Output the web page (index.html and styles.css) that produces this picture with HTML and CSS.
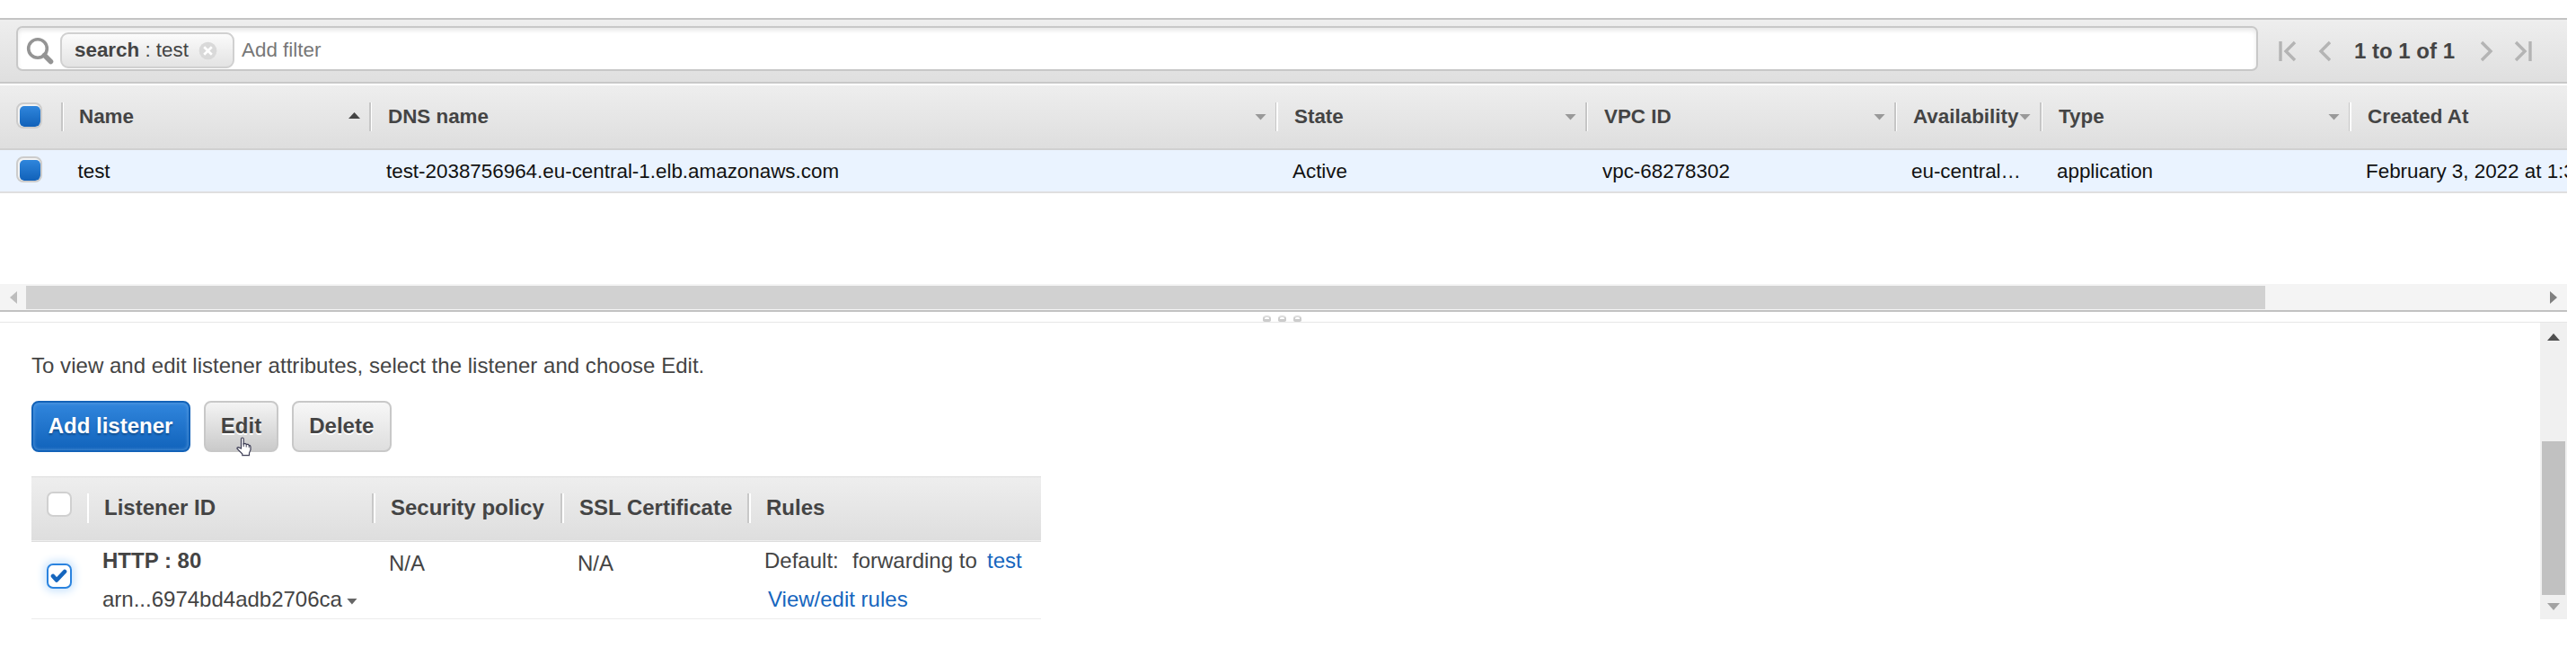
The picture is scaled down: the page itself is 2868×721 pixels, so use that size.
FILE: index.html
```html
<!DOCTYPE html>
<html lang="en">
<head>
<meta charset="utf-8">
<title>Load Balancers</title>
<link rel="stylesheet" href="styles.css">
</head>
<body>
<div class="console">
  <div class="toolbar">
    <div class="search">
      <svg class="search-icon" viewBox="0 0 32 32"><circle cx="13" cy="13" r="10.3" fill="none" stroke="#949494" stroke-width="3.6"/><path d="M20.5 20.5 27.5 27.5" stroke="#949494" stroke-width="5.6" stroke-linecap="round"/></svg>
      <div class="chip"><b>search</b><span> : test</span>
        <svg class="chip-close" viewBox="0 0 22 22"><circle cx="11" cy="11" r="10.3" fill="#d9d9d9"/><path d="M6.5 6.5l9 9M15.5 6.5l-9 9" stroke="#fff" stroke-width="2.8"/></svg>
      </div>
      <span class="add-filter">Add filter</span>
    </div>
    <div class="pager">
      <svg class="pg-first" viewBox="0 0 20 24"><path d="M2 1v22M18 2 8 12 18 22"/></svg>
      <svg class="pg-prev" viewBox="0 0 14 24"><path d="M13 2 3 12 13 22"/></svg>
      <b>1 to 1 of 1</b>
      <svg class="pg-next" viewBox="0 0 14 24"><path d="M1 2 11 12 1 22"/></svg>
      <svg class="pg-last" viewBox="0 0 20 24"><path d="M18 1v22M2 2 12 12 2 22"/></svg>
    </div>
  </div>

  <div class="grid-row grid-head">
    <div class="cell check"><span class="box"></span></div>
    <div class="cell">Name<i class="sort-up"></i></div>
    <div class="cell">DNS name<i class="caret"></i></div>
    <div class="cell">State<i class="caret"></i></div>
    <div class="cell">VPC ID<i class="caret"></i></div>
    <div class="cell">Availability<i class="caret"></i></div>
    <div class="cell">Type<i class="caret"></i></div>
    <div class="cell">Created At</div>
  </div>
  <div class="grid-row grid-data">
    <div class="cell check"><span class="box"></span></div>
    <div class="cell">test</div>
    <div class="cell">test-2038756964.eu-central-1.elb.amazonaws.com</div>
    <div class="cell">Active</div>
    <div class="cell">vpc-68278302</div>
    <div class="cell">eu-central…</div>
    <div class="cell">application</div>
    <div class="cell">February 3, 2022 at 1:3</div>
  </div>

  <div class="hscroll">
    <svg class="arrow-left" viewBox="0 0 8 14"><path d="M8 0v14L0 7z" fill="#bdbdbd"/></svg>
    <div class="hthumb"></div>
    <svg class="arrow-right" viewBox="0 0 8 14"><path d="M0 0v14l8-7z" fill="#808080"/></svg>
  </div>

  <div class="splitter"><i></i><i></i><i></i></div>

  <div class="details">
    <div class="content">
      <p class="hint">To view and edit listener attributes, select the listener and choose Edit.</p>
      <div class="buttons">
        <div class="btn primary">Add listener</div>
        <div class="btn hover">Edit
          <svg class="cursor" viewBox="0 0 17 22"><path d="M5.5 13V2.5Q5.5 1 6.8 1T8.200 2.500V8L10 7.500Q11 8 11.500 8.400L13 8.300Q14 8.700 14.200 9.400Q15.800 9.300 16 11V14.500L14.500 18V20.700H6.800V19L1 13.300Q.8 11.500 2.600 11.600Z" fill="#fff" stroke="#3d3d55" stroke-width="1.200"/><path d="M8.200 7v4M11.200 8v3.500M14.200 9v3" stroke="#3d3d55" stroke-width="1"/></svg>
        </div>
        <div class="btn">Delete</div>
      </div>
      <div class="listeners">
        <div class="l-row l-head">
          <div class="l-cell"><span class="l-box"></span></div>
          <div class="l-cell">Listener ID</div>
          <div class="l-cell">Security policy</div>
          <div class="l-cell">SSL Certificate</div>
          <div class="l-cell">Rules</div>
        </div>
        <div class="l-row l-data">
          <div class="l-cell"><span class="l-box on"><svg viewBox="0 0 20 18"><path d="M3 9 7 13.500 16 4" fill="none" stroke="#1666be" stroke-width="4.600" stroke-linecap="round" stroke-linejoin="round"/></svg></span></div>
          <div class="l-cell"><b>HTTP : 80</b><div class="arn">arn...6974bd4adb2706ca<i class="arn-caret"></i></div></div>
          <div class="l-cell na">N/A</div>
          <div class="l-cell na">N/A</div>
          <div class="l-cell"><div class="rule"><span>Default:</span><span>forwarding to</span><a>test</a></div><a class="edit-rules">View/edit rules</a></div>
        </div>
      </div>
    </div>
    <div class="vscroll">
      <svg class="arrow-up" viewBox="0 0 14 8"><path d="M0 8h14L7 0z" fill="#505050"/></svg>
      <div class="vthumb"></div>
      <svg class="arrow-down" viewBox="0 0 14 8"><path d="M0 0h14L7 8z" fill="#a3a3a3"/></svg>
    </div>
  </div>
</div>
</body>
</html>
```

FILE: styles.css
```css
* { box-sizing: border-box; }
body {
  margin: 0;
  background: #fff;
  color: #444;
  font-family: "Liberation Sans", Arial, sans-serif;
  font-size: 22.4px;
  overflow: hidden;
}
svg { display: block; flex: none; }
.console { width: 2858px; padding-top: 20px; overflow: hidden; }

.toolbar {
  height: 73px;
  display: flex;
  align-items: flex-start;
  padding: 7px 41px 0 18px;
  border-top: 2px solid #c4c4c4;
  border-bottom: 2px solid #c8c8c8;
  background: linear-gradient(#eee, #dfdfdf);
}
.search {
  width: 2496px;
  height: 50px;
  flex: none;
  display: flex;
  align-items: center;
  padding-left: 10px;
  background: #fff;
  border: 2px solid #c8c8c8;
  border-radius: 7px;
  box-shadow: inset 0 3px 5px #e8e8e8;
}
.search-icon { width: 32px; height: 32px; margin: 6px 7px 0 -1px; }
.chip {
  width: 194px;
  height: 40px;
  margin: 4px 0 0 -1px;
  display: flex;
  align-items: center;
  padding-left: 14px;
  white-space: pre;
  border: 2px solid #d0d0d0;
  border-radius: 9px;
  background: linear-gradient(#fbfbfb, #e3e3e3);
}
.chip-close { width: 21px; height: 21px; margin: 1px 0 0 11px; }
.add-filter { margin: 3px 0 0 8px; color: #777; }
.pager {
  height: 50px;
  flex: 1;
  display: flex;
  align-items: center;
  padding: 5px 0 0 23px;
  font-size: 24px;
  white-space: nowrap;
}
.pager b { width: 113px; }
.pager svg { height: 24px; fill: none; stroke: #b4b4b4; stroke-width: 3.4; }
.pg-first, .pg-last { width: 20px; }
.pg-prev, .pg-next { width: 14px; }
.pg-prev { margin: 0 26px 0 24px; }
.pg-next { margin: 0 23px 0 28px; }

.grid-row {
  display: grid;
  grid-template-columns: 71px 343px 1009px 345px 344px 162px 344px 240px;
}
.grid-head {
  height: 74px;
  border-top: 2px solid #fff;
  border-bottom: 2px solid #d0d0d0;
  background: linear-gradient(#eee, #dedede);
  font-weight: bold;
}
.cell {
  display: flex;
  align-items: center;
  white-space: nowrap;
  min-width: 0;
  padding-left: 18px;
}
.grid-head .cell:not(:last-child) {
  background: linear-gradient(90deg, #c6c6c6 50%, #fff 50%) right 19px / 3px 32px no-repeat;
  padding-right: 13px;
}
.grid-head .cell:nth-child(2) { padding-left: 17px; }
.grid-head .caret, .grid-head .sort-up { margin-left: auto; width: 13px; height: 7px; flex: none; }
.caret { background: #999; clip-path: polygon(0 0, 100% 0, 50% 100%); }
.grid-head .sort-up { background: #444; clip-path: polygon(0 100%, 100% 100%, 50% 0); margin-bottom: 3px; }
.grid-data {
  height: 48px;
  background: #eaf3ff;
  border-bottom: 2px solid #dfdfdf;
  color: #111;
}
.grid-data .cell { padding: 1px 0 0 16px; }
.grid-data .cell:nth-child(2) { padding-left: 15.500px; }
.grid-row .check, .grid-data .check { padding: 0 0 0 18px; }
.box {
  width: 29px;
  height: 29px;
  margin-bottom: 4px;
  padding: 2px 0 0 2px;
  border: 2px solid #ccc;
  border-radius: 8px;
  background: #f3f3f3;
  overflow: hidden;
}
.box::before {
  content: "";
  display: block;
  width: 23px;
  height: 23px;
  border-radius: 5px;
  background: linear-gradient(#2f86dc, #1161b9);
}

.hscroll {
  height: 31px;
  margin-top: 101px;
  display: flex;
  align-items: center;
  padding: 0 11px;
  background: #f4f4f4;
  border-bottom: 2px solid #c2c2c2;
}
.arrow-left, .arrow-right { width: 8px; height: 14px; }
.hthumb { width: 2493px; height: 26px; margin: 0 auto 0 10px; background: #d1d1d1; }

.splitter {
  height: 12px;
  display: flex;
  justify-content: center;
  align-items: flex-end;
  gap: 8px;
  padding-right: 3px;
  border-bottom: 1px solid #e6e6e6;
}
.splitter i { width: 9px; height: 7px; border: 2px solid #ccc; border-top-color: #ddd; border-bottom-width: 3px; border-radius: 4px 4px 2px 2px; }

.details { height: 330px; display: flex; justify-content: space-between; font-size: 24px; line-height: 28px; }
.content { padding: 34px 0 0 35px; }
.hint { margin: 0 0 25px; letter-spacing: .03px; }
.buttons { display: flex; gap: 15px; margin-bottom: 27px; }
.btn {
  height: 57px;
  width: 110.500px;
  display: flex;
  align-items: center;
  justify-content: center;
  position: relative;
  padding-bottom: 2px;
  border: 2px solid #c8c8c8;
  border-radius: 8px;
  background: linear-gradient(#f7f7f7, #dedede);
  font-weight: bold;
  text-shadow: 0 2px 0 #fff;
}
.btn.primary {
  width: 177px;
  padding-right: 1px;
  border-color: #1262b8;
  background: linear-gradient(#3186dd, #1163bb);
  box-shadow: inset 0 0 4px #63a1df;
  color: #fff;
  text-shadow: 0 2px 2px #124f90;
}
.btn.hover { width: 83px; background: linear-gradient(#f4f4f4, #cacaca); }
.cursor { position: absolute; left: 34px; top: 38px; width: 17px; height: 22px; }

.listeners { width: 1124px; }
.l-row { display: grid; grid-template-columns: 64px 319px 210px 208px 323px; }
.l-head {
  height: 73px;
  border-top: 1px solid #ddd;
  border-bottom: 3px double #ddd;
  background: linear-gradient(#eee, #dedede);
  font-weight: bold;
}
.l-cell { white-space: nowrap; }
.l-head .l-cell { padding: 20px 0 0 17px; }
.l-head .l-cell:not(:last-child) { background: linear-gradient(90deg, #c8c8c8 50%, #fff 50%) right 18px / 4px 33px no-repeat; }
.l-head .l-cell:first-child { background-image: linear-gradient(90deg, transparent 50%, #fff 50%); padding: 16px 0 0 17px; }
.l-box {
  display: block;
  width: 28px;
  height: 28px;
  background: #fff;
  border: 2px solid #d0d0d0;
  border-radius: 7px;
}
.l-data { height: 87px; border-bottom: 2px solid #ececec; }
.l-data .l-cell { padding: 7px 0 0 15px; }
.l-data .l-cell:first-child { padding: 24px 0 0 17px; }
.l-box.on { border-color: #2a83df; box-shadow: 0 0 10px 3px #c9e3fc; }
.l-box.on svg { width: 20px; height: 18px; margin: 3px 0 0 2px; }
.arn { display: flex; align-items: center; margin-top: 15px; }
.arn-caret { width: 12px; height: 7px; margin: 4px 0 0 5px; background: #666; clip-path: polygon(0 0, 100% 0, 50% 100%); }
.l-data .na { padding-top: 10px; }
.rule { display: flex; }
.rule span:first-child { width: 98px; }
.rule span:nth-child(2) { width: 150px; }
a { color: #1666be; }
.edit-rules { display: block; margin: 15px 0 0 4px; }

.vscroll {
  width: 30px;
  display: flex;
  flex-direction: column;
  align-items: center;
  background: #f0f0f0;
  padding: 12px 2px 10px;
}
.arrow-up, .arrow-down { width: 14px; height: 8px; }
.vthumb { width: 26px; height: 171px; margin: 112px 0 auto; background: #c1c1c1; }
```
